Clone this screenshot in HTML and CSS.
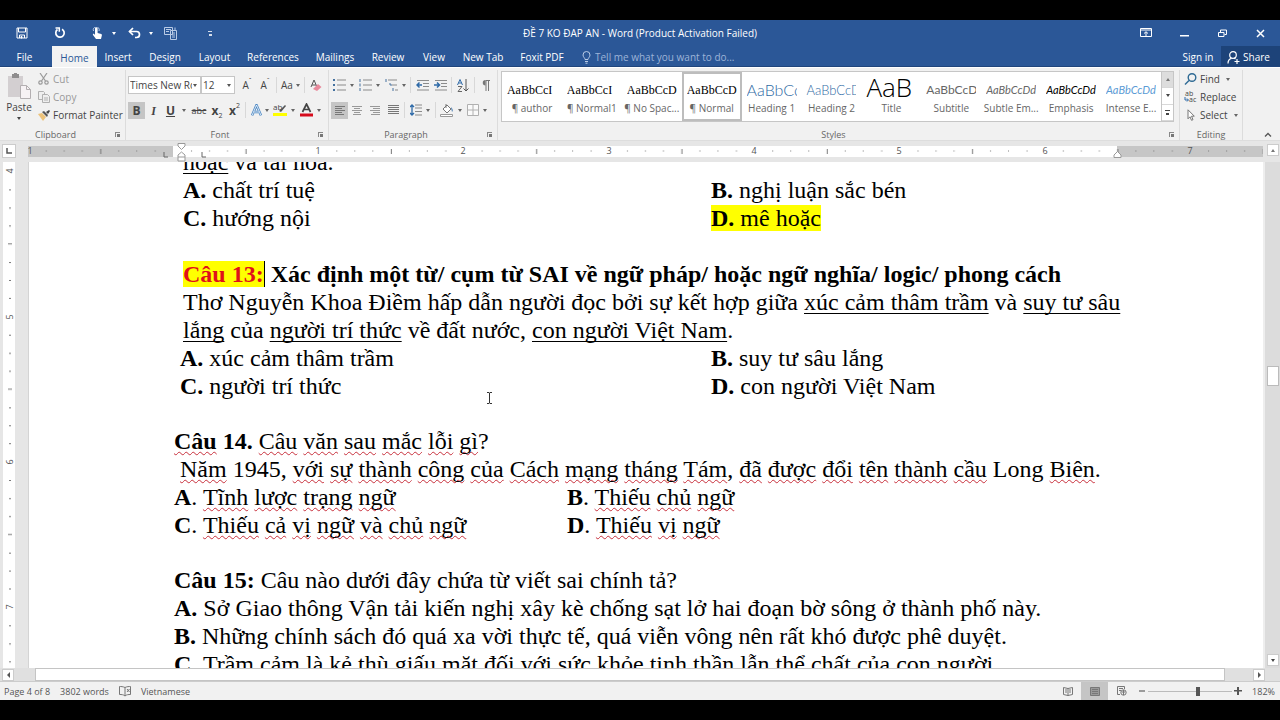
FILE: index.html
```html
<!DOCTYPE html>
<html lang="vi">
<head>
<meta charset="utf-8">
<title>ĐỀ 7 KO ĐAP AN - Word</title>
<link rel="stylesheet" href="styles.css">
</head>
<body>
<div class="app">
  <header class="titlebar">
    <div class="quick">
      <button class="q" aria-label="Save"><svg width="12" height="12" viewBox="0 0 12 12" fill="none" stroke="#fff"><path d="M1 1h10v10H1z"/><path d="M2.500 1v4h7V1M3.500 11V8h5v3" /><path d="M5 9.500h1v1.500H5z" fill="#fff"/></svg></button>
      <button class="q" aria-label="Redo"><svg width="12" height="12" viewBox="0 0 12 12" fill="none" stroke="#fff" stroke-width="1.700"><path d="M8 2.200a4.200 4.200 0 1 1-4.500.3"/><path d="M1.500 1h3.800v3.800" stroke-width="1.500"/></svg></button>
      <button class="q" aria-label="Touch mode"><svg width="13" height="13" viewBox="0 0 13 13"><path d="M4 1.500a1.300 1.300 0 0 1 2.600 0V6l3.600 1c.6.200.8.600.7 1.200L10 12H5L2 8c-.5-1 .6-1.500 1.200-.9L4 8z" fill="#fff"/><path d="M2.500 4a3 3 0 1 1 5.500 0" fill="none" stroke="#b9cbe6"/></svg><i class="car"></i></button>
      <button class="q" aria-label="Undo"><svg width="13" height="12" viewBox="0 0 13 12" fill="none" stroke="#fff" stroke-width="1.700"><path d="M1.500 4.500h7a3 3 0 0 1 0 6H7"/><path d="M5 1L1.500 4.500 5 8"/></svg><i class="car"></i></button>
      <button class="q" aria-label="Compare"><svg width="14" height="13" viewBox="0 0 14 13" fill="none" stroke="#b9cbe6"><path d="M.5.500h8v7h-8zM2 2.500h5M2 4.500h3M6.500 3.500h6v9h-6z"/><path d="M8 6h3M8 8h3M8 10h3M11 .5v3"/></svg></button>
      <button class="q" aria-label="Customize"><i class="more"></i></button>
    </div>
    <div class="doc-title">ĐỀ 7 KO ĐAP AN - Word (Product Activation Failed)</div>
    <div class="win">
      <button aria-label="Ribbon options"><svg width="12" height="10" viewBox="0 0 12 10" fill="none" stroke="#fff"><path d="M.5.500h11v8H.5zM.5 2h11M6 8V4M4 5.500L6 3.700l2 1.800"/></svg></button>
      <button aria-label="Minimize"><svg width="9" height="10" viewBox="0 0 9 10"><path d="M0 7h9v1.500H0z" fill="#fff"/></svg></button>
      <button aria-label="Restore"><svg width="9" height="9" viewBox="0 0 9 9" fill="none" stroke="#fff"><path d="M.5 3.500h5.500v4H.5zM2.500 3V1h6v4.500H6.500"/></svg></button>
      <button aria-label="Close"><svg width="9" height="9" viewBox="0 0 9 9" stroke="#fff" stroke-width="1.500"><path d="M1 1l7 7M8 1L1 8"/></svg></button>
    </div>
  </header>

  <nav class="tabs">
    <button>File</button><button class="on">Home</button><button>Insert</button><button>Design</button><button>Layout</button><button>References</button><button>Mailings</button><button>Review</button><button>View</button><button>New Tab</button><button>Foxit PDF</button>
    <label class="tell"><svg width="9" height="13" viewBox="0 0 9 13" fill="none" stroke="#b9cbe6"><path d="M3 8.500C3 7 1 6 1 4a3.500 3.500 0 0 1 7 0c0 2-2 3-2 4.500zM3 10.500h3M3.500 12.200h2"/></svg><input aria-label="Tell me" placeholder="Tell me what you want to do..."></label>
    <button class="sign">Sign in</button>
    <button class="share"><svg width="13" height="13" viewBox="0 0 13 13" fill="none" stroke="#fff" stroke-width="1.200"><circle cx="6" cy="4" r="3.300"/><path d="M1 12.500c0-3 1.500-4.700 3.500-5.200M10 8v5M7.500 10.500h5M7 7l1.500 1"/></svg>Share</button>
  </nav>

  <section class="ribbon">
    <div class="group clip">
      <div class="body">
        <button class="paste"><svg width="24" height="26" viewBox="0 0 24 26"><path d="M1 3h15v21H1z" fill="#d3cfd1"/><path d="M5 1h7v4H5z" fill="#8f8d8e"/><path d="M7 0h3v2H7z" fill="#8f8d8e"/><path d="M13.500 12.500h6l4 4v9h-10z" fill="#f6f2f4" stroke="#b3afb1"/><path d="M19.500 12.500v4h4" fill="none" stroke="#b3afb1"/></svg>Paste<i class="car"></i></button>
        <div class="stack">
          <button class="off"><svg width="12" height="12" viewBox="0 0 12 12" fill="none" stroke="#9a9a9a" stroke-width="1.200"><path d="M2 0l5.500 8M9 0L3.500 8"/><circle cx="2.500" cy="9.500" r="1.700"/><circle cx="8.500" cy="9.500" r="1.700"/></svg>Cut</button>
          <button class="off"><svg width="12" height="12" viewBox="0 0 12 12" fill="#eee" stroke="#b0b0b0"><path d="M.5.500h5l1 1v7h-6z"/><path d="M4.500 3.500h5l2 2v6h-7z"/><path d="M6 7h4M6 9h4"/></svg>Copy</button>
          <button><svg width="12" height="11" viewBox="0 0 12 11"><path d="M0 4l4-1 4 4-3 4z" fill="#ecc27a"/><path d="M4 2l2-1 4 4-1 2z" fill="#555"/><path d="M8 2l3-2 1 1-2 3z" fill="#444"/></svg>Format Painter</button>
        </div>
      </div>
      <div class="cap">Clipboard<i class="launch"></i></div>
    </div>

    <div class="group font">
      <div class="body rows">
        <div class="row">
          <span class="combo w72"><select aria-label="Font"><option>Times New Roman</option></select></span>
          <span class="combo w33"><select aria-label="Size"><option>12</option></select></span>
          <button class="w18 push">A<sup>ˆ</sup></button><button class="w18 sm">A<sup>ˇ</sup></button><i class="sep"></i>
          <button class="w24">Aa<i class="car"></i></button><i class="sep"></i>
          <button class="w18"><svg width="12" height="13" viewBox="0 0 12 13"><path d="M1 8L4 1l3 7M2 6h4" fill="none" stroke="#555"/><path d="M3 10l5-5 3.500 3L7 12z" fill="#e88a9c"/></svg></button>
        </div>
        <div class="row">
          <button class="w17 sel"><b>B</b></button><button class="w17"><b><em>I</em></b></button><button class="w17"><b class="un">U</b></button><i class="car mid"></i>
          <button class="w18"><s>abc</s></button><button class="w18"><b>x</b><sub>2</sub></button><button class="w17"><b>x</b><sup>2</sup></button><i class="sep wide"></i>
          <button class="w24"><svg width="11" height="13" viewBox="0 0 11 13" fill="none"><path d="M1 11.500L5.500 1 10 11.500M3 8h5" stroke="#4a87c4" stroke-width="2.400"/><path d="M1 11.500L5.500 1 10 11.500M3 8h5" stroke="#fff" stroke-width=".8"/></svg><i class="car"></i></button>
          <button class="w26"><svg width="14" height="14" viewBox="0 0 14 14"><text x="0" y="7" font-size="8" fill="#444">ab</text><path d="M6 8l6-6 1 1-5 6z" fill="#555"/><path d="M0 10h14v3H0z" fill="#ff0"/></svg><i class="car"></i></button>
          <button class="w26"><svg width="13" height="14" viewBox="0 0 13 14"><path d="M2.500 9L6.500 1l4 8M4 6.500h5" fill="none" stroke="#444" stroke-width="1.700"/><path d="M0 10.500h13v3H0z" fill="#d60b1c"/></svg><i class="car"></i></button>
        </div>
      </div>
      <div class="cap">Font<i class="launch"></i></div>
    </div>

    <div class="group para">
      <div class="body rows">
        <div class="row">
          <button class="w26"><svg width="13" height="12" viewBox="0 0 13 12"><path d="M0 0h2v2H0zM0 5h2v2H0zM0 10h2v2H0z" fill="#44719f"/><path d="M4 1h9M4 6h9M4 11h9" stroke="#8b8b8b"/></svg><i class="car"></i></button>
          <button class="w26"><svg width="13" height="12" viewBox="0 0 13 12"><path d="M1 0v3M1 4.500v3M1 9v3" stroke="#44719f"/><path d="M4 1h9M4 6h9M4 11h9" stroke="#8b8b8b"/></svg><i class="car"></i></button>
          <button class="w26"><svg width="13" height="12" viewBox="0 0 13 12"><path d="M1 0v3M4 5h2v2M8 9v3" stroke="#44719f" fill="none"/><path d="M3 1h9M7 6h5M10 11h3" stroke="#8b8b8b"/></svg><i class="car"></i></button>
          <i class="sep"></i>
          <button class="w18"><svg width="13" height="11" viewBox="0 0 13 11"><path d="M1 .5h12M7 3.500h6M7 6.500h6M1 10h12" stroke="#8b8b8b"/><path d="M6 5H1M3.500 2.500L1 5l2.500 2.500" stroke="#2e6aa8" stroke-width="1.500" fill="none"/></svg></button>
          <button class="w18"><svg width="13" height="11" viewBox="0 0 13 11"><path d="M1 .5h12M7 3.500h6M7 6.500h6M1 10h12" stroke="#8b8b8b"/><path d="M0 5h5M3 2.500L5.500 5 3 7.500" stroke="#2e6aa8" stroke-width="1.500" fill="none"/></svg></button>
          <i class="sep"></i>
          <button class="w18"><svg width="12" height="13" viewBox="0 0 12 13" fill="none"><path d="M.5 6L3 .5 5.500 6M1.500 4h3" stroke="#2e6aa8"/><path d="M1 7.500h4L1 12.500h4" stroke="#666"/><path d="M9 0v12M6.500 9.500L9 12l2.500-2.500" stroke="#555"/></svg></button>
          <i class="sep"></i>
          <button class="w18"><svg width="8" height="11" viewBox="0 0 8 11"><path d="M4 0h4v1H4z M3.500 0a2.500 2.500 0 0 0 0 5.500z" fill="#777"/><path d="M4 0v11M6.500 0v11" stroke="#777"/></svg></button>
        </div>
        <div class="row">
          <button class="w17 sel"><svg width="10" height="9" viewBox="0 0 10 9"><path d="M0 .5h10M0 2.500h7M0 4.500h10M0 6.500h7M0 8.500h9" stroke="#777"/></svg></button>
          <button class="w18"><svg width="10" height="9" viewBox="0 0 10 9"><path d="M0 .5h10M2 2.500h6M0 4.500h10M2 6.500h6M1 8.500h8" stroke="#999"/></svg></button>
          <button class="w18"><svg width="10" height="9" viewBox="0 0 10 9"><path d="M0 .5h10M3 2.500h7M0 4.500h10M3 6.500h7M1 8.500h9" stroke="#999"/></svg></button>
          <button class="w18"><svg width="11" height="10" viewBox="0 0 11 10"><path d="M0 .5h11M0 2.500h11M0 4.500h11M0 6.500h11M0 8.500h11" stroke="#777"/></svg></button>
          <i class="sep"></i>
          <button class="w26"><svg width="12" height="12" viewBox="0 0 12 12" fill="none"><path d="M5 1h7M5 4h7M5 7.500h7M5 11h7" stroke="#8b8b8b"/><path d="M2 1v10M0 3l2-2 2 2M0 9l2 2 2-2" stroke="#2e6aa8" stroke-width="1.300"/></svg><i class="car"></i></button>
          <i class="sep"></i>
          <button class="w26"><svg width="14" height="13" viewBox="0 0 14 13"><path d="M3 5l4-4 4 4-4 4z" fill="#fff" stroke="#777"/><path d="M6 0v4" stroke="#777"/><path d="M11 3c2 2 2 4 1 5z" fill="#2e6aa8"/><path d="M.5 10.500h12v2H.5z" fill="#fff" stroke="#999"/></svg><i class="car"></i></button>
          <button class="w26"><svg width="12" height="12" viewBox="0 0 12 12" fill="#fafafa" stroke="#b0b0b0"><path d="M.5.500h11v11H.5zM6 0v12M0 6h12"/></svg><i class="car"></i></button>
        </div>
      </div>
      <div class="cap">Paragraph<i class="launch"></i></div>
    </div>

    <div class="group styles">
      <div class="gallery">
        <button><span class="pv tm">AaBbCcI</span>¶ author</button>
        <button><span class="pv tm">AaBbCcI</span>¶ Normal1</button>
        <button><span class="pv tm">AaBbCcD</span>¶ No Spac...</button>
        <button class="cur"><span class="pv tm">AaBbCcD</span>¶ Normal</button>
        <button><span class="pv h1">AaBbCc</span>Heading 1</button>
        <button><span class="pv h2">AaBbCcD</span>Heading 2</button>
        <button><span class="pv tt">AaB</span>Title</button>
        <button><span class="pv st">AaBbCcD</span>Subtitle</button>
        <button><span class="pv it">AaBbCcDd</span>Subtle Em...</button>
        <button><span class="pv it blk">AaBbCcDd</span>Emphasis</button>
        <button><span class="pv it blu">AaBbCcDd</span>Intense E...</button>
        <div class="gscroll"><button class="dim" aria-label="Up"><i class="car up"></i></button><button aria-label="Down"><i class="car"></i></button><button aria-label="More"><i class="more"></i></button></div>
      </div>
      <div class="cap">Styles<i class="launch"></i></div>
    </div>

    <div class="group edit">
      <div class="body stack">
        <button><svg width="13" height="12" viewBox="0 0 13 12" fill="none" stroke="#2e6a94" stroke-width="1.400"><circle cx="8" cy="4.500" r="3.800"/><path d="M5 7.500L1 11.500"/></svg>Find<i class="car"></i></button>
        <button><svg width="13" height="12" viewBox="0 0 13 12"><text x="1" y="5" font-size="7" fill="#444">ab</text><text x="5" y="11" font-size="7" fill="#444">ac</text><path d="M1 6v3h3M3 7.500L4.500 9 3 10.500" fill="none" stroke="#2e6aa8"/></svg>Replace</button>
        <button><svg width="13" height="12" viewBox="0 0 13 12"><path d="M4 .8v9l2-2 1.500 3.500 1.500-.6L7.500 7.200h2.800z" fill="#fff" stroke="#777"/></svg>Select<i class="car"></i></button>
      </div>
      <div class="cap">Editing</div>
    </div>
    <button class="collapse" aria-label="Collapse ribbon"><svg width="8" height="5" viewBox="0 0 8 5" fill="none" stroke="#555" stroke-width="1.300"><path d="M1 4.500l3-3 3 3"/></svg></button>
  </section>

  <div class="hruler">
    <button class="corner" aria-label="Tab stop"><svg width="6" height="6" viewBox="0 0 6 6"><path d="M1 0v5h5" fill="none" stroke="#555" stroke-width="1.500"/></svg></button>
    <svg class="scale" height="21" width="1235">
      <defs><pattern id="t" x="-.25" width="145.300" height="11" y="5" patternUnits="userSpaceOnUse"><path d="M18 5h1M36 5h1M54 5h1M90.500 5h1M108.500 5h1M127 5h1" stroke="#777"/><path d="M73 3v5" stroke="#777"/></pattern></defs>
      <rect y="5" width="1235" height="11" fill="#fff"/><rect y="5" width="145" height="11" fill="#c6c6c6"/><rect x="1089" y="5" width="146" height="11" fill="#c6c6c6"/>
      <rect y="5" width="1235" height="11" fill="url(#t)"/>
      <g class="nums"><text x="2" y="13">1</text><text x="290" y="13">1</text><text x="435" y="13">2</text><text x="581" y="13">3</text><text x="726" y="13">4</text><text x="871" y="13">5</text><text x="1017" y="13">6</text><text x="1162" y="13">7</text></g>
      <path d="M150 2.500h7v2.500l-3.500 3.500L150 5zM153.500 11l3.500 3v6h-7v-6zM150 16h7M1089.500 10.500l3.500 3.500v2.500h-7V14z" fill="#fff" stroke="#999"/>
      <path d="M136 11v5h4M174 11v5h4" fill="none" stroke="#666"/>
    </svg>
    <button class="arrow" aria-label="Scroll up"><i class="car up"></i></button>
  </div>

  <main class="work">
    <svg class="vruler" width="15" height="506">
      <defs><pattern id="v" y="9.500" width="15" height="145.300" patternUnits="userSpaceOnUse"><path d="M9 18.500h2M9 36.500h2M9 54.500h2M8 72.500h4M9 91h2M9 109h2M9 127h2" stroke="#777"/></pattern></defs>
      <rect x="3" width="12" height="506" fill="#fff"/><rect width="15" height="506" fill="url(#v)"/>
      <g class="nums"><text transform="translate(13 9) rotate(-90)">4</text><text transform="translate(13 155) rotate(-90)">5</text><text transform="translate(13 300) rotate(-90)">6</text><text transform="translate(13 445) rotate(-90)">7</text></g>
    </svg>
    <article class="paper">
      <div class="text">
        <p class="in"><u>hoặc</u> và tài hoa.</p>
        <div class="ans in"><p><b>A.</b> chất trí tuệ</p><p><b>B.</b> nghị luận sắc bén</p></div>
        <div class="ans in"><p><b>C.</b> hướng nội</p><p><mark><b>D.</b> mê hoặc</mark></p></div>
        <p class="gap"></p>
        <p class="in"><b><mark class="caret">Câu 13:</mark> Xác định một từ/ cụm từ SAI về ngữ pháp/ hoặc ngữ nghĩa/ logic/ phong cách</b></p>
        <p class="in">Thơ Nguyễn Khoa Điềm hấp dẫn người đọc bởi sự kết hợp giữa <u>xúc cảm thâm trầm</u> và <u>suy tư sâu</u></p>
        <p class="in"><u>lắng</u> của <u>người trí thức</u> về đất nước, <u>con người Việt Nam</u>.</p>
        <div class="ans near"><p><b>A.</b> xúc cảm thâm trầm</p><p><b>B.</b> suy tư sâu lắng</p></div>
        <div class="ans near"><p><b>C.</b> người trí thức</p><p><b>D.</b> con người Việt Nam</p></div>
        <p class="gap"></p>
        <p><b><span class="w">Câu</span> 14.</b> <span class="w">Câu</span> <span class="w">văn</span> <span class="w">sau</span> <span class="w">mắc</span> <span class="w">lỗi</span> <span class="w">gì</span>?</p>
        <p class="first"><span class="w">Năm</span> 1945, <span class="w">với</span> <span class="w">sự</span> <span class="w">thành</span> <span class="w">công</span> <span class="w">của</span> <span class="w">Cách</span> <span class="w">mạng</span> <span class="w">tháng</span> <span class="w">Tám</span>, <span class="w">đã</span> <span class="w">được</span> <span class="w">đổi</span> <span class="w">tên</span> <span class="w">thành</span> <span class="w">cầu</span> Long <span class="w">Biên</span>.</p>
        <div class="ans half"><p><b>A</b>. <span class="w">Tĩnh</span> <span class="w">lược</span> <span class="w">trạng</span> <span class="w">ngữ</span></p><p><b>B</b>. <span class="w">Thiếu</span> <span class="w">chủ</span> <span class="w">ngữ</span></p></div>
        <div class="ans half"><p><b>C</b>. <span class="w">Thiếu</span> <span class="w">cả</span> <span class="w">vị</span> <span class="w">ngữ</span> <span class="w">và</span> <span class="w">chủ</span> <span class="w">ngữ</span></p><p><b>D</b>. <span class="w">Thiếu</span> <span class="w">vị</span> <span class="w">ngữ</span></p></div>
        <p class="gap"></p>
        <p><b>Câu 15:</b> Câu nào dưới đây chứa từ viết sai chính tả?</p>
        <p><b>A.</b> Sở Giao thông Vận tải kiến nghị xây kè chống sạt lở hai đoạn bờ sông ở thành phố này.</p>
        <p><b>B.</b> Những chính sách đó quá xa vời thực tế, quá viễn vông nên rất khó được phê duyệt.</p>
        <p><b>C.</b> Trầm cảm là kẻ thù giấu mặt đối với sức khỏe tinh thần lẫn thể chất của con người.</p>
      </div>
      <svg class="ibeam" width="7" height="12" viewBox="0 0 7 12" fill="none" stroke="#333"><path d="M1 .5h2l.5.500.5-.5h2M3.500 1v10M1 11.500h2l.5-.5.5.500h2"/></svg>
    </article>
    <div class="vscroll"><i class="thumb"></i><button class="arrow" aria-label="Scroll down"><i class="car"></i></button></div>
  </main>

  <div class="hscroll"><button class="arrow" aria-label="Scroll left"><i class="car left"></i></button><i class="thumb"></i><button class="arrow" aria-label="Scroll right"><i class="car right"></i></button></div>

  <footer class="status">
    <span>Page 4 of 8</span><span>3802 words</span>
    <svg width="12" height="11" viewBox="0 0 12 11" fill="none" stroke="#777"><path d="M6 1.500C4 .5 2 .5.500.500v8c2 0 4 0 5.500 1.500zM6 1.500C8 .5 10 .5 11.500.500v8c-2 0-4 0-5.500 1.500M8 3l2.500 3M10.500 3L8 6"/></svg>
    <span>Vietnamese</span>
    <div class="views">
      <button aria-label="Read mode"><svg width="10" height="9" viewBox="0 0 10 9" fill="none" stroke="#777"><path d="M.5.500L5 1.500l4.500-1v7L5 8.500l-4.500-1zM5 1v8M2 3h2M2 5h2M6 3h2M6 5h2"/></svg></button>
      <button class="sel" aria-label="Print layout"><svg width="10" height="9" viewBox="0 0 10 9" fill="#999" stroke="#777"><path d="M.5.500h9v8h-9zM2 2.500h6M2 4.500h6M2 6.500h6"/></svg></button>
      <button aria-label="Web layout"><svg width="10" height="10" viewBox="0 0 10 10" fill="none" stroke="#777"><path d="M3 8.500H.5v-8h7V3M2 2.500h4M2 4.500h2"/><circle cx="6.500" cy="6.500" r="2.700"/><path d="M4.500 6h4M6.500 4v5"/></svg></button>
    </div>
    <div class="zoom">
      <button class="zm" aria-label="Zoom out"><svg width="8" height="8"><path d="M1 3.500h6v1H1z" fill="#444"/></svg></button>
      <input type="range" aria-label="Zoom" min="10" max="500" value="305">
      <button class="zm" aria-label="Zoom in"><svg width="8" height="8"><path d="M0 3h3V0h2v3h3v1.500H5V8H3V4.500H0z" fill="#555"/></svg></button>
    </div>
    <span class="pct">182%</span>
  </footer>
</div>
</body>
</html>
```
FILE: styles.css
```css
* { box-sizing: border-box; margin: 0; }
body { background: #000; font-family: "Open Sans", "Noto Sans", sans-serif; font-size: 10px; color: #444; }
button { border: 0; padding: 0; background: none; font: inherit; color: inherit; display: flex; align-items: center; justify-content: center; white-space: nowrap; }
svg { flex: none; }
i { font-style: normal; flex: none; }
.app { height: 100vh; padding: 20px 0; display: flex; flex-direction: column; }
.car { border: 2px solid transparent; border-top: 3px solid currentColor; border-bottom: 0; width: 4px; height: 3px; }
.car.up { border-top: 0; border-bottom: 3px solid #777; }
.car.left { border: 3px solid transparent; border-right-color: #555; border-left: 0; width: 3px; height: 6px; }
.car.right { border: 3px solid transparent; border-left-color: #555; border-right: 0; width: 3px; height: 6px; }
.more { width: 5px; height: 5px; border-top: 1px solid; background: linear-gradient(currentColor, currentColor) center bottom / 3px 2px no-repeat; }

.titlebar { height: 26px; flex: none; background: #2b5797; color: #fff; display: grid; grid-template-columns: 1fr auto 1fr; align-items: center; }
.quick { display: grid; grid-template-columns: 44px 32px 42px 32px 42px 36px; }
.q { gap: 8px; height: 26px; }
.q .car { margin-right: -12px; }
.q .more { width: 4px; opacity: .8; }
.win { display: flex; justify-content: flex-end; padding-right: 1px; }
.win button { width: 38px; height: 26px; }

.tabs { height: 21px; flex: none; background: #2b5797; color: #fff; display: grid; grid-template-columns: 49px 48px 42px 52px 47px 70px 54px 52px 40px 58px 60px 1fr 46px 59px; border-bottom: 1px solid #20457c; }
.tabs > * { padding-top: 2px; }
.tabs .on { background: #f3f3f3; color: #2b5797; margin: 0 0 -1px 3px; }
.tell { display: flex; align-items: center; gap: 4px; padding-left: 10px; }
.tell input { border: 0; background: none; flex: 1; min-width: 0; font: inherit; padding: 0; }
.tell input::placeholder { color: #9db4d8; opacity: 1; }
.share { background: #1d4379; gap: 3px; padding-right: 4px; }

.ribbon { height: 74px; flex: none; background: #f1f1f1; border-top: 1px solid #fff; border-bottom: 1px solid #ddd; display: flex; }
.group { display: flex; flex-direction: column; border-right: 1px solid #dcdcdc; margin: 2px 0 0; }
.body { flex: 1; display: flex; }
.clip { width: 126px; }
.font { width: 203px; }
.para { width: 169px; }
.styles { flex: 1; padding: 1px 5px 0 3px; }
.edit { width: 63px; }
.cap { height: 12px; font-size: 9px; line-height: 14px; text-align: center; color: #666; position: relative; padding-right: 14px; }
.launch { position: absolute; right: 5px; top: 4px; width: 5px; height: 5px; border-top: 1px solid #888; border-left: 1px solid #888; background: linear-gradient(#777, #777) right bottom / 3px 3px no-repeat; }
.styles .launch { right: 0; }
.styles .cap { margin-top: auto; padding-right: 8px; }
.paste { width: 38px; flex-direction: column; gap: 1px; padding-bottom: 6px; }
.paste .car { margin-top: 2px; }
.stack { display: flex; flex-direction: column; }
.stack button { height: 18px; gap: 3px; justify-content: flex-start; }
.stack .off { color: #999; }
.edit .stack { padding-left: 4px; }
.edit .cap { padding: 0; }
.edit .car, .row .car { color: #666; }
.edit .car { margin-left: 3px; }

.rows { flex-direction: column; padding: 6px 2px 0; gap: 7px; }
.row { display: flex; align-items: center; height: 18px; }
.row button { height: 17px; }
.w17 { width: 17px; } .w18 { width: 18px; } .w24 { width: 23px; gap: 3px; } .w26 { width: 26px; gap: 4px; }
.w72 { width: 73px; } .w33 { width: 34px; }
.push { margin-left: 3px; }
.row .mid { margin: 0 4px 0 3px; }
.sep { width: 1px; height: 16px; background: #d8d8d8; margin: 0 2px; }
.sel { background: #c5c5c5; }
.row b { font-size: 12px; } .row s { font-size: 9px; } .row em { font-family: "Liberation Serif", serif; }
.row sup, .row sub { font-size: 7px; line-height: 7px; }
.row sup { align-self: flex-start; } .row sub { align-self: flex-end; }
.un { text-decoration: underline; }
.combo { position: relative; height: 18px; border: 1px solid #c6c6c6; background: #fff; }
.combo select { appearance: none; border: 0; background: none; width: 100%; height: 16px; padding: 0 8px 0 1px; font: inherit; color: #444; }
.combo::after { content: ""; position: absolute; right: 3px; top: 7px; border: 2px solid transparent; border-top: 3px solid #555; border-bottom: 0; }

.gallery { flex: none; height: 51px; border: 1px solid #c6c6c6; background: #fff; display: grid; grid-template-columns: repeat(11, 1fr) 12px; }
.gallery > button { flex-direction: column; justify-content: flex-start; overflow: hidden; padding: 5px 2px 0; color: #666; border: 2px solid transparent; min-width: 0; }
.gallery > .cur { border: 2px solid #bdbdbd; }
.pv { height: 22px; line-height: 22px; width: 50px; overflow: hidden; text-align: left; }
.tm { font-family: "Liberation Serif", serif; font-size: 12px; color: #000; }
.h1, .h2 { font-family: Lato, sans-serif; font-weight: 300; color: #2f6ba5; }
.h1 { font-size: 16px; }
.h2 { font-size: 13px; }
.tt { font-weight: 300; font-size: 26px; line-height: 16px; color: #000; }
.st { font-family: Lato, sans-serif; font-size: 12px; }
.it { font-family: Lato, sans-serif; font-style: italic; font-size: 11px; }
.blk { color: #000; } .blu { color: #5b9bd5; }
.gscroll { display: grid; grid-template-rows: 1fr 1fr 1fr; border-left: 1px solid #c6c6c6; }
.gscroll button { border-bottom: 1px solid #d8d8d8; }
.gscroll .dim { background: #ddd; }
.collapse { width: 37px; align-items: flex-end; padding: 0 0 3px 13px; }

.hruler { height: 21px; flex: none; background: #e6e6e6; display: flex; }
.corner { width: 14px; height: 14px; margin: 3px 12px 0 2px; background: #fff; border: 1px solid #ccc; }
.scale { flex: 1; min-width: 0; }
.nums { font-size: 9px; fill: #555; text-anchor: middle; }
.arrow { width: 12px; height: 12px; background: #fff; border: 1px solid #ccc; flex: none; }
.hruler .arrow { margin: 3px 1px 0 4px; }

.work { flex: 1; min-height: 0; background: #e6e6e6; display: flex; overflow: hidden; }
.paper { flex: 1; min-width: 0; margin-left: 13px; background: #fff; border-left: 1px solid #d4d4d4; overflow: hidden; position: relative; }
.text { margin-top: -14px; padding-left: 145px; font: 24px/28px "Liberation Serif", "Times New Roman", serif; color: #000; white-space: nowrap; }
.text p { height: 28px; }
.text .gap { height: 28px; }
.in { padding-left: 9px; }
.near { padding-left: 6px; }
.first { padding-left: 6px; }
.ans { display: grid; grid-template-columns: 528px 1fr; }
.near { grid-template-columns: 531px 1fr; }
.half { grid-template-columns: 393px 1fr; }
.text .gap ~ .gap { height: 27px; }
u { text-decoration-thickness: 1px; text-underline-offset: 3px; text-decoration-skip-ink: none; }
.w { text-decoration: underline wavy #c8303c 1px; text-underline-offset: 2px; text-decoration-skip-ink: none; }
mark { background: #ff0; color: #000; }
.caret { color: #e0101a; border-right: 1px solid #000; }
.ibeam { position: absolute; left: 457px; top: 230px; }
.vscroll { width: 17px; background: #dcdcdc; border-left: 2px solid #eee; display: flex; flex-direction: column; align-items: flex-end; padding: 0 1px 2px; }
.vscroll .thumb { width: 12px; height: 20px; background: #fff; border: 1px solid #bbb; margin: 204px 0 auto; }

.hscroll { height: 14px; flex: none; background: #e0e0e0; display: flex; align-items: center; padding: 0 15px 0 2px; gap: 21px; border-bottom: 1px solid #ccc; }
.hscroll .thumb { flex: 1; align-self: stretch; background: #fff; border: 1px solid #c4c4c4; margin-right: 7px; }

.status { height: 18px; flex: none; background: #f1f1f1; display: flex; align-items: center; padding: 0 5px 0 4px; gap: 10px; font-size: 9px; color: #555; }
.views { margin-left: auto; margin-right: -7px; display: flex; }
.views button { width: 27px; height: 18px; }
.zoom { display: flex; align-items: center; gap: 2px; }
.zm { width: 8px; }
.zoom input { appearance: none; width: 84px; height: 10px; background: linear-gradient(#bbb, #bbb) center / 100% 1px no-repeat; }
.zoom input::-webkit-slider-thumb { appearance: none; width: 4px; height: 9px; background: #555; }
```
